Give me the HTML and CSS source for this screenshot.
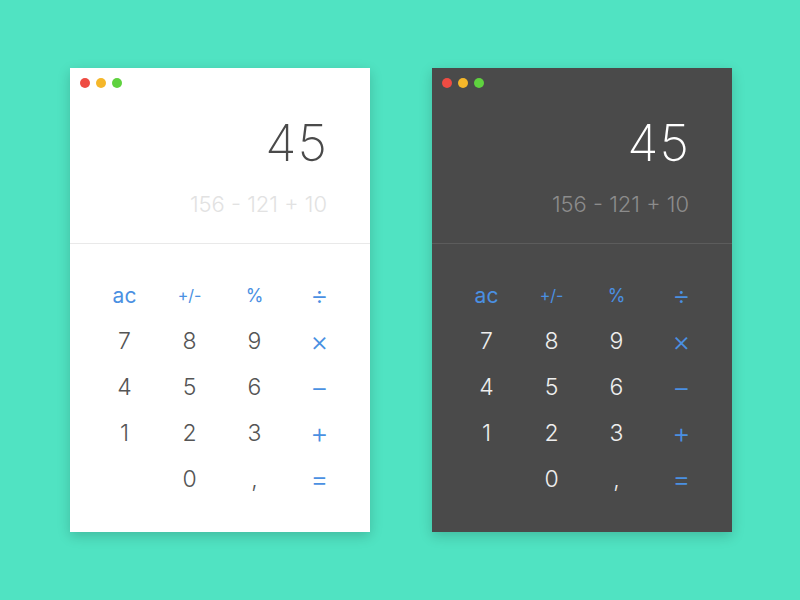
FILE: index.html
```html
<!DOCTYPE html>
<html lang="en">
<head>
  <meta charset="UTF-8">
  <meta name="viewport" content="width=device-width, initial-scale=1.0">
  <title>Calculator - Light &amp; Dark</title>
  <link rel="stylesheet" href="styles.css">
</head>
<body>
  <div class="calc light">
    <div class="titlebar">
      <span class="dot red"></span>
      <span class="dot yellow"></span>
      <span class="dot green"></span>
    </div>
    <div class="display">
      <div class="result">45</div>
      <div class="expr">156 - 121 + 10</div>
    </div>
    <div class="keys">
      <span class="key op ac">ac</span>
      <span class="key op small">+/-</span>
      <span class="key op pct">%</span>
      <span class="key op sym">÷</span>
      <span class="key">7</span>
      <span class="key">8</span>
      <span class="key">9</span>
      <span class="key op sym">×</span>
      <span class="key">4</span>
      <span class="key">5</span>
      <span class="key">6</span>
      <span class="key op sym">−</span>
      <span class="key">1</span>
      <span class="key">2</span>
      <span class="key">3</span>
      <span class="key op sym">+</span>
      <span class="key"></span>
      <span class="key">0</span>
      <span class="key">,</span>
      <span class="key op sym">=</span>
    </div>
  </div>

  <div class="calc dark">
    <div class="titlebar">
      <span class="dot red"></span>
      <span class="dot yellow"></span>
      <span class="dot green"></span>
    </div>
    <div class="display">
      <div class="result">45</div>
      <div class="expr">156 - 121 + 10</div>
    </div>
    <div class="keys">
      <span class="key op ac">ac</span>
      <span class="key op small">+/-</span>
      <span class="key op pct">%</span>
      <span class="key op sym">÷</span>
      <span class="key">7</span>
      <span class="key">8</span>
      <span class="key">9</span>
      <span class="key op sym">×</span>
      <span class="key">4</span>
      <span class="key">5</span>
      <span class="key">6</span>
      <span class="key op sym">−</span>
      <span class="key">1</span>
      <span class="key">2</span>
      <span class="key">3</span>
      <span class="key op sym">+</span>
      <span class="key"></span>
      <span class="key">0</span>
      <span class="key">,</span>
      <span class="key op sym">=</span>
    </div>
  </div>
</body>
</html>
```

FILE: styles.css
```css
body {
  font-family: Inter, "Open Sans", sans-serif;
  background-color: #50e3c2;
  margin: 0;
  padding: 0 0 0 70px;
  display: flex;
  align-items: center;
  gap: 62px;
  height: 100vh;
}

.calc {
  width: 300px;
  height: 464px;
  display: flex;
  flex-direction: column;
  box-shadow: 0 4px 12px rgba(0, 0, 0, 0.18);
}

.light {
  background: #fff;
  color: #555;
}

.dark {
  background: #4a4a4a;
  color: #eee;
}

.titlebar {
  display: flex;
  gap: 6px;
  padding: 10px 10px 0;
}

.dot {
  width: 10px;
  height: 10px;
  border-radius: 50%;
}

.red { background: #ee4c43; }
.yellow { background: #f5b72a; }
.green { background: #5fd23f; }

.display {
  height: 156px;
  box-sizing: border-box;
  padding: 29px 43px 0 0;
  text-align: right;
  border-bottom: 1px solid #e9e9e9;
}

.dark .display {
  border-bottom-color: #5c5c5c;
}

.result {
  font-size: 51px;
  font-weight: 200;
  line-height: 52px;
  letter-spacing: 1px;
  margin-right: -1px;
}

.light .result { color: #4a4a4a; }
.dark .result { color: #fff; }

.expr {
  margin-top: 23px;
  font-size: 22px;
  font-weight: 300;
  line-height: 24px;
}

.light .expr { color: #e2e2e2; }
.dark .expr { color: #8c8c8c; }

.keys {
  display: grid;
  grid-template-columns: repeat(4, 65px);
  grid-auto-rows: 46px;
  padding: 28px 0 0 22px;
}

.key {
  display: flex;
  align-items: center;
  justify-content: center;
  font-size: 23px;
  font-weight: 300;
}

.op {
  color: #4a90e2;
}

.ac {
  font-size: 21px;
  font-weight: 400;
}

.small {
  font-size: 16px;
  font-weight: 400;
}

.pct {
  font-size: 18px;
  font-weight: 400;
}

.sym {
  font-size: 28px;
  font-weight: 300;
}
```
